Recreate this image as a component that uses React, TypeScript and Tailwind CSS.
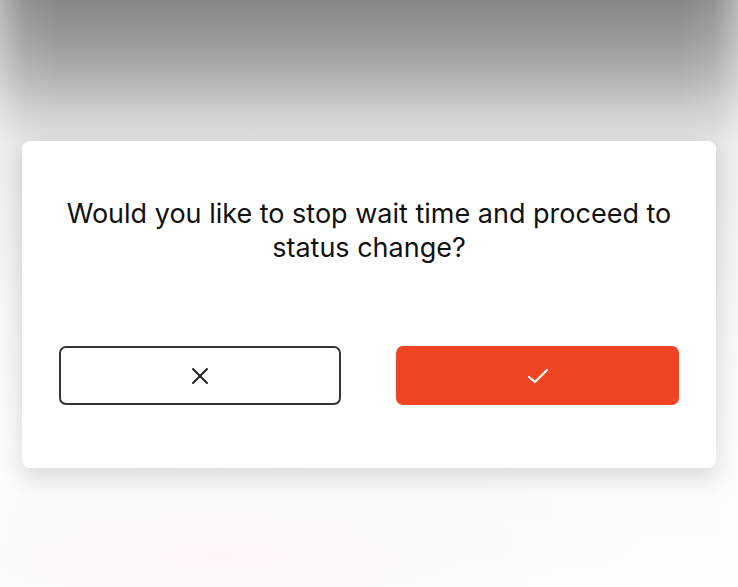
import React from "react";

export default function App() {
  return (
    <div
      className="relative w-[738px] h-[587px] overflow-hidden bg-[linear-gradient(180deg,#868686_0px,#9a9a9a_40px,#b4b4b4_80px,#cdcdcd_110px,#e2e2e2_145px,#f0f0f0_300px,#fbfbfb_480px,#fefefe_587px)]"
      style={{ fontFamily: "Inter, 'Noto Sans', sans-serif" }}
    >
      <div className="absolute inset-0 bg-[linear-gradient(90deg,rgba(255,255,255,0.4)_0px,rgba(255,255,255,0.1)_25px,rgba(255,255,255,0)_60px,rgba(255,255,255,0)_678px,rgba(255,255,255,0.1)_713px,rgba(255,255,255,0.4)_738px)]" />
      <div className="absolute left-0 right-0 bottom-0 h-[140px] bg-[radial-gradient(ellipse_at_30%_80%,rgba(255,230,225,0.3),rgba(255,255,255,0)_60%)]" />
      <div className="relative pt-[141px] px-[22px]">
        <div className="bg-white rounded-[8px] h-[327px] shadow-[0_10px_22px_rgba(0,0,0,0.13)] flex flex-col items-center pt-[56px] px-[37px]">
          <p className="text-[27px] leading-[34px] text-[#111] text-center font-normal">
            Would you like to stop wait time and proceed to
            <br />
            status change?
          </p>
          <div className="mt-[81px] w-full flex justify-between">
            <button className="w-[282px] h-[59px] rounded-[7px] border-2 border-[#353535] bg-white flex items-center justify-center">
              <svg width="20" height="20" viewBox="0 0 20 20" fill="none" stroke="#222" strokeWidth="2" strokeLinecap="round">
                <path d="M3 3L17 17M17 3L3 17" />
              </svg>
            </button>
            <button className="w-[283px] h-[59px] rounded-[7px] bg-[#ef4423] flex items-center justify-center">
              <svg width="24" height="20" viewBox="0 0 24 20" fill="none" stroke="#fff" strokeWidth="2.2" strokeLinecap="round" strokeLinejoin="round">
                <path d="M3 11L9 16L21 4" />
              </svg>
            </button>
          </div>
        </div>
      </div>
    </div>
  );
}
